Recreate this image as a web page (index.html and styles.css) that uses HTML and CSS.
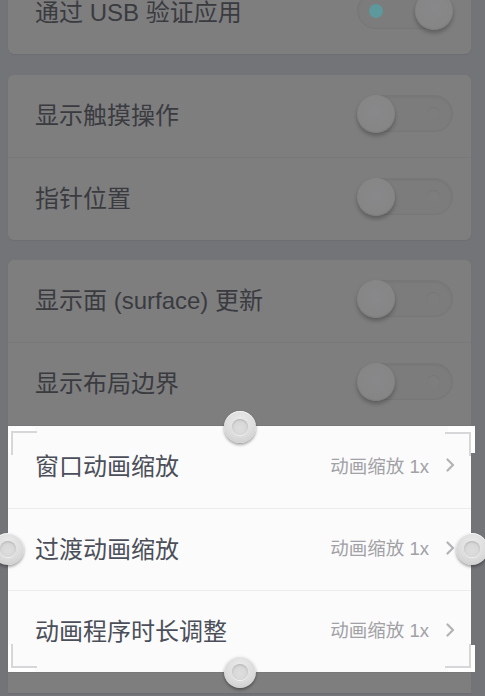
FILE: index.html
```html
<!DOCTYPE html>
<html lang="zh-CN">
<head>
<meta charset="utf-8">
<title>开发者选项</title>
<link rel="stylesheet" href="styles.css">
</head>
<body>
<div class="screen">
  <section class="card card-first">
    <div class="row">
      <span class="label">通过 USB 验证应用</span>
      <span class="switch on"><span class="dot"></span><span class="knob"></span></span>
    </div>
  </section>

  <section class="card">
    <div class="row">
      <span class="label">显示触摸操作</span>
      <span class="switch"><span class="knob"></span></span>
    </div>
    <div class="row">
      <span class="label">指针位置</span>
      <span class="switch"><span class="knob"></span></span>
    </div>
  </section>

  <section class="card card-last">
    <div class="row">
      <span class="label">显示面 (surface) 更新</span>
      <span class="switch"><span class="knob"></span></span>
    </div>
    <div class="row">
      <span class="label">显示布局边界</span>
      <span class="switch"><span class="knob"></span></span>
    </div>

    <div class="selection">
      <div class="row row-link">
        <span class="label">窗口动画缩放</span>
        <span class="value">动画缩放 1x</span>
        <svg class="chevron" width="9" height="14" viewBox="0 0 9 14"><polyline points="1.5,1.5 7,7 1.5,12.5" fill="none" stroke="#b3b3b6" stroke-width="2.2" stroke-linecap="round" stroke-linejoin="round"/></svg>
      </div>
      <div class="row row-link">
        <span class="label">过渡动画缩放</span>
        <span class="value">动画缩放 1x</span>
        <svg class="chevron" width="9" height="14" viewBox="0 0 9 14"><polyline points="1.5,1.5 7,7 1.5,12.5" fill="none" stroke="#b3b3b6" stroke-width="2.2" stroke-linecap="round" stroke-linejoin="round"/></svg>
      </div>
      <div class="row row-link">
        <span class="label">动画程序时长调整</span>
        <span class="value">动画缩放 1x</span>
        <svg class="chevron" width="9" height="14" viewBox="0 0 9 14"><polyline points="1.5,1.5 7,7 1.5,12.5" fill="none" stroke="#b3b3b6" stroke-width="2.2" stroke-linecap="round" stroke-linejoin="round"/></svg>
      </div>

      <span class="corner tl"></span>
      <span class="corner tr"></span>
      <span class="corner bl"></span>
      <span class="corner br"></span>

      <span class="handle h-top"></span>
      <span class="handle h-bottom"></span>
      <span class="handle h-left"></span>
      <span class="handle h-right"></span>
    </div>

    <div class="row row-rest"></div>
  </section>
</div>
</body>
</html>
```

FILE: styles.css
```css
html, body {
  margin: 0;
  padding: 0;
}

body {
  background: #737478;
  font-family: "Liberation Sans", "Noto Sans CJK SC", sans-serif;
  overflow: hidden;
  height: 696px;
}

.screen {
  display: flex;
  flex-direction: column;
}

.card {
  background: #7e7e7f;
  border-radius: 6px;
  margin: 20px 14px 0 8px;
  box-shadow: 0 1px 1px rgba(0, 0, 0, 0.06);
}

.card-first {
  margin-top: -28px;
  margin-bottom: 1px;
}

.card-last {
  border-radius: 6px 6px 0 0;
}

.row {
  display: flex;
  align-items: center;
  height: 82px;
  padding: 0 18px 0 27px;
  box-sizing: border-box;
}

.card > .row + .row,
.card > .row + .selection,
.card > .selection + .row {
  border-top: 1px solid #78787a;
}

.card > .row + .row {
  height: 83px;
}

.card > .row-rest {
  height: 21px;
}

.label {
  flex: 1;
  font-size: 24px;
  color: #3a3b3f;
  white-space: nowrap;
  margin-top: -5px;
}

/* toggle switch (dimmed) */
.switch {
  position: relative;
  width: 96px;
  height: 37px;
  box-sizing: border-box;
  border-radius: 19px;
  border: 1px solid #777778;
  background: #7c7c7d;
  box-shadow: inset 0 1px 3px rgba(0, 0, 0, 0.06);
  flex: none;
  margin-top: -6px;
}

.switch::after {
  content: "";
  position: absolute;
  right: 12px;
  top: 11px;
  width: 13px;
  height: 13px;
  border-radius: 50%;
  background: #7d7d7e;
  box-shadow: inset 0 1px 1px rgba(0, 0, 0, 0.05);
}

.switch.on::after {
  display: none;
}

.knob {
  position: absolute;
  left: -1px;
  top: -1px;
  width: 38px;
  height: 38px;
  border-radius: 50%;
  background: radial-gradient(circle at 50% 45%, #88888a 0, #868687 60%, #818182 100%);
  box-shadow: 0 3px 4px rgba(0, 0, 0, 0.26), inset 0 -1px 1px rgba(0, 0, 0, 0.06);
}

.switch.on .knob {
  left: auto;
  right: -1px;
}

.dot {
  position: absolute;
  left: 11px;
  top: 11px;
  width: 14px;
  height: 14px;
  border-radius: 50%;
  background: #5c989c;
}

/* highlighted selection */
.selection {
  position: relative;
  background: #fbfbfb;
  z-index: 1;
}

.selection .row + .row {
  border-top: 1px solid #ececed;
}

.row-link {
  padding-right: 16px;
}

.row-link .label {
  color: #4b4f5a;
}

.value {
  font-size: 18.5px;
  color: #a1a1a6;
  margin-right: 17px;
  margin-top: -5px;
  white-space: nowrap;
}

.chevron {
  display: block;
  flex: none;
  margin-top: -4px;
}

/* crop corners */
.corner {
  position: absolute;
  width: 27px;
  height: 27px;
  box-sizing: border-box;
  border: 0 solid #ffffff;
}

.corner::after {
  content: "";
  position: absolute;
  width: 24px;
  height: 22px;
  border: 0 solid #d7d7d9;
}

.corner.tl {
  top: 0;
  left: 0;
  border-top-width: 5px;
  border-left-width: 3px;
}
.corner.tl::after {
  top: 0;
  left: 0;
  border-top-width: 2px;
  border-left-width: 2px;
}

.corner.tr {
  top: 0;
  right: -4px;
  border-top-width: 6px;
  border-right-width: 4px;
}
.corner.tr::after {
  top: 0;
  right: 0;
  border-top-width: 2px;
  border-right-width: 2px;
}

.corner.bl {
  bottom: 0;
  left: 0;
  border-bottom-width: 4px;
  border-left-width: 3px;
}
.corner.bl::after {
  bottom: 0;
  left: 0;
  border-bottom-width: 2px;
  border-left-width: 2px;
}

.corner.br {
  bottom: 0;
  right: -4px;
  border-bottom-width: 4px;
  border-right-width: 4px;
}
.corner.br::after {
  bottom: 0;
  right: 0;
  border-bottom-width: 2px;
  border-right-width: 2px;
}

/* crop handles */
.handle {
  position: absolute;
  width: 32px;
  height: 32px;
  border-radius: 50%;
  background: radial-gradient(circle at 50% 35%, #ececec 0, #dcdcdc 55%, #c6c6c6 100%);
  box-shadow: 0 2px 3px rgba(0, 0, 0, 0.35), inset 0 1px 0 rgba(255, 255, 255, 0.7);
  z-index: 2;
}

.handle::after {
  content: "";
  position: absolute;
  left: 8px;
  top: 8px;
  width: 16px;
  height: 16px;
  border-radius: 50%;
  background: radial-gradient(circle at 50% 60%, #dedede 0, #d2d2d2 100%);
  box-shadow: inset 0 1px 2px rgba(0, 0, 0, 0.16), 0 1px 0 rgba(255, 255, 255, 0.6);
}

.h-top {
  top: -15px;
  left: 50%;
  margin-left: -16px;
}

.h-bottom {
  bottom: -16px;
  left: 50%;
  margin-left: -16px;
}

.h-left {
  left: -16px;
  top: 50%;
  margin-top: -16px;
}

.h-right {
  right: -17px;
  top: 50%;
  margin-top: -16px;
}
```
